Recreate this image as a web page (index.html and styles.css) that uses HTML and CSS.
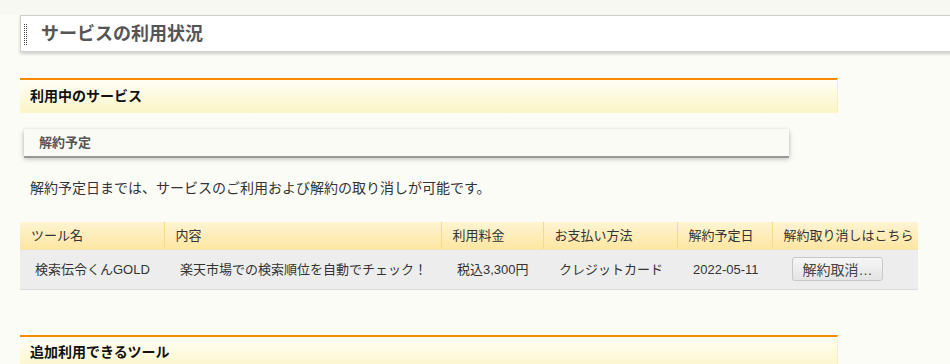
FILE: index.html
```html
<!DOCTYPE html>
<html lang="ja">
<head>
    <meta charset="UTF-8">
    <meta name="viewport" content="width=device-width, initial-scale=1.0">
    <title>サービスの利用状況</title>
    <link rel="stylesheet" href="styles.css">
</head>
<body>
    <div class="page">
        <h1 class="page-title">サービスの利用状況</h1>

        <h2 class="section-head">利用中のサービス</h2>

        <h3 class="sub-head">解約予定</h3>
        <p class="note">解約予定日までは、サービスのご利用および解約の取り消しが可能です。</p>

        <table class="service-table">
            <thead>
                <tr>
                    <th class="col-name">ツール名</th>
                    <th class="col-desc">内容</th>
                    <th class="col-price">利用料金</th>
                    <th class="col-pay">お支払い方法</th>
                    <th class="col-date">解約予定日</th>
                    <th class="col-action">解約取り消しはこちら</th>
                </tr>
            </thead>
            <tbody>
                <tr>
                    <td>検索伝令くんGOLD</td>
                    <td>楽天市場での検索順位を自動でチェック！</td>
                    <td>税込3,300円</td>
                    <td>クレジットカード</td>
                    <td>2022-05-11</td>
                    <td><button class="cancel-btn">解約取消…</button></td>
                </tr>
            </tbody>
        </table>

        <h2 class="section-head section-next">追加利用できるツール</h2>
    </div>
</body>
</html>
```

FILE: styles.css
```css
* {
    margin: 0;
    padding: 0;
    box-sizing: border-box;
}

body {
    font-family: "Liberation Sans", "Noto Sans CJK JP", sans-serif;
    background: linear-gradient(#f8f8f3 0, #f8f8f3 15px, #fcfcf7 15px);
    color: #333;
    height: 100vh;
    overflow: hidden;
}

.page {
    padding: 15px 0 0 20px;
}

/* page title */
.page-title {
    position: relative;
    display: flex;
    align-items: center;
    height: 37px;
    margin-right: -10px;
    padding-left: 20px;
    background-color: #fff;
    border: 1px solid #cfcfcf;
    border-right: none;
    box-shadow: 0 2px 3px rgba(0, 0, 0, 0.18);
    font-size: 18px;
    font-weight: bold;
    color: #555;
    line-height: 1;
}

.page-title::before {
    content: "";
    position: absolute;
    left: 2px;
    top: 7px;
    width: 4px;
    height: 22px;
    background-color: #444;
    background-image:
        linear-gradient(90deg, #fff 1px, transparent 1px),
        linear-gradient(#fff 1px, transparent 1px);
    background-size: 2px 2px;
}

/* orange section heading */
.section-head {
    display: flex;
    align-items: center;
    width: 818px;
    height: 35px;
    margin-top: 26px;
    padding: 0 0 2px 10px;
    border-top: 2px solid #f88a00;
    border-right: 1px solid #fbf0bd;
    background: linear-gradient(#fffef6, #fcf5c6);
    font-size: 14px;
    font-weight: bold;
    color: #111;
    line-height: 1;
}

.section-next {
    margin-top: 45px;
}

/* grey sub heading */
.sub-head {
    display: flex;
    align-items: center;
    width: 765px;
    height: 27px;
    margin: 16px 0 0 4px;
    padding-left: 15px;
    background-color: #fbfbf6;
    box-shadow: 0 2px 0 #999, 0 3px 5px rgba(0, 0, 0, 0.25), 0 0 3px rgba(0, 0, 0, 0.1);
    font-size: 13px;
    font-weight: bold;
    color: #555;
    line-height: 1;
}

.note {
    margin: 22px 0 0 10px;
    font-size: 14px;
    line-height: 20px;
    color: #333;
}

/* table */
.service-table {
    margin-top: 24px;
    width: 898px;
    border-collapse: collapse;
    table-layout: fixed;
    font-size: 13px;
    line-height: 1;
}

.service-table th {
    height: 27px;
    padding: 0 4px 0 11px;
    text-align: left;
    font-weight: normal;
    white-space: nowrap;
    color: #333;
    background: linear-gradient(#fff4d3, #fde6a2);
    border-left: 1px solid #f8d98c;
    border-bottom: 1px solid #f3e4b4;
}

.service-table th:first-child {
    border-left: none;
}

.col-name { width: 144px; }
.col-desc { width: 277px; }
.col-price { width: 102px; }
.col-pay { width: 134px; }
.col-date { width: 95px; }
.col-action { width: 146px; }

.service-table td {
    height: 40px;
    padding: 0 15px 0 16px;
    background-color: #ededed;
    border-bottom: 1px solid #dcdcdc;
    color: #333;
    white-space: nowrap;
}

.service-table td:first-child {
    padding-left: 15px;
}

.cancel-btn {
    width: 91px;
    height: 24px;
    margin-left: 4px;
    font-family: "Liberation Sans", "Noto Sans CJK JP", sans-serif;
    font-size: 14px;
    color: #444;
    background: linear-gradient(#f6f6f6, #e4e4e4);
    border: 1px solid #c8c8c8;
    border-radius: 3px;
    cursor: pointer;
}

.cancel-btn:hover {
    background: linear-gradient(#fafafa, #ebebeb);
}
```
